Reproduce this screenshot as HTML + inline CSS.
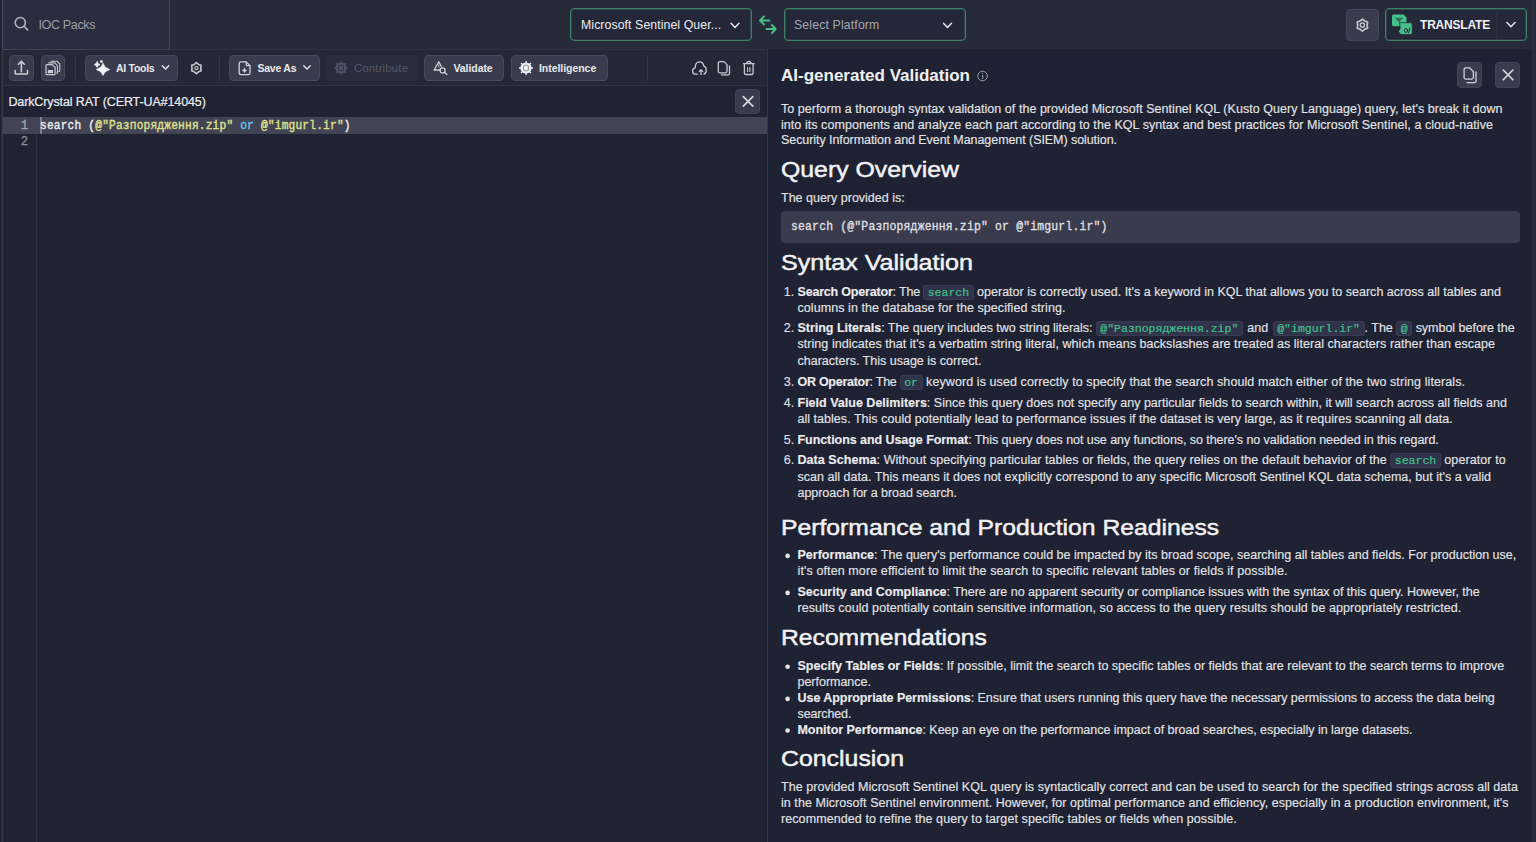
<!DOCTYPE html>
<html><head><meta charset="utf-8">
<style>
*{box-sizing:border-box;margin:0;padding:0}
html,body{width:1536px;height:842px;overflow:hidden;background:#202332;font-family:"Liberation Sans",sans-serif;color:#e4e4e8}
.a{position:absolute}
.tx{position:absolute;white-space:nowrap}
.dd{position:absolute;top:8px;height:33px;border:1px solid #3b8068;border-radius:4px;background:#242737;box-shadow:inset 0 0 0 1px rgba(59,128,104,0.35),inset 0 -2px 0 #251f36}
.btn{position:absolute;top:55px;height:26px;background:#3a3c4e;border:1px solid #45475a;border-radius:4px}
.btnt{position:absolute;top:61px;font-size:10.5px;line-height:14px;font-weight:bold;white-space:nowrap;color:#e8e8ec}
.sep{position:absolute;top:55px;width:1px;height:26px;background:#353848}
.ibtn{position:absolute;background:#3a3c4e;border-radius:4px}
.rp{position:absolute;white-space:nowrap;font-size:12.5px;line-height:20px;height:20px;color:#e2e2e6;-webkit-text-stroke:0.15px #e2e2e6}
.rp b{font-weight:bold;color:#ececf0}
.rh{position:absolute;white-space:nowrap;font-size:21.5px;line-height:28px;height:28px;color:#f2f2f4;font-weight:normal;-webkit-text-stroke:0.45px #f2f2f4;transform-origin:0 50%}
code{font-family:"Liberation Mono",monospace;font-size:11.5px;color:#42c08a;-webkit-text-stroke:0.2px #42c08a;background:#30334a;border:1px solid #3a3d52;border-radius:3px;padding:0 3.5px}
.mk{color:#dcdce2}
.mono{font-family:"Liberation Mono",monospace}
</style></head>
<body>
<!-- HEADER -->
<div class="a" style="left:0;top:0;width:1536px;height:49px;background:#272a39"></div>


<div class="dd" style="left:570px;width:182px"></div>
<div id="t_src" class="tx" style="left:581px;top:17.2px;font-size:12.3px;line-height:16px;color:#ececf0;letter-spacing:0.08px">Microsoft Sentinel Quer...</div>
<div class="dd" style="left:784px;width:182px"></div>
<div id="t_plat" class="tx" style="left:794px;top:17.2px;font-size:12.3px;line-height:16px;color:#a4a6b2;letter-spacing:0.14px">Select Platform</div>

<div class="ibtn" style="left:1346px;top:9px;width:33px;height:32px;border:1px solid #43465a"></div>
<div class="dd" style="left:1385px;width:142px;background:#252838"></div>
<div class="a" style="left:1496px;top:9px;width:1px;height:31px;background:#2c2f40"></div>
<div id="t_trans" class="tx" style="left:1420px;top:17px;font-size:12px;line-height:16px;font-weight:bold;color:#f0f0f2;letter-spacing:-0.2px">TRANSLATE</div>

<!-- LEFT PANEL -->
<div class="a" style="left:2px;top:49px;width:766px;height:793px;background:#202332;border-left:1px solid #3a3c48;border-right:1px solid #33364a"></div>
<div class="a" style="left:0;top:0;width:1px;height:842px;background:#1b1e2b"></div><div class="a" style="left:1px;top:0;width:1px;height:842px;background:#2b2d39"></div>
<div class="a" style="left:3px;top:49px;width:764px;height:37px;background:#262837;border-top:1px solid #2e3142;border-bottom:1px solid #303344"></div>

<div class="a" style="left:2px;top:-2px;width:168px;height:52px;background:#2a2d3d;border:1px solid #40435a;border-top:none;border-radius:0 0 3px 0"></div>
<div id="t_ioc" class="tx" style="left:38.5px;top:17px;font-size:12.5px;line-height:16px;letter-spacing:-0.35px;color:#9c9eab">IOC Packs</div>
<div class="btn" style="left:9px;width:25px"></div>
<div class="btn" style="left:41px;width:24px"></div>
<div class="sep" style="left:75px"></div>
<div class="btn" style="left:85px;width:93px"></div>
<div id="t_ai" class="btnt" style="left:116px;letter-spacing:-0.29px">AI Tools</div>
<div class="sep" style="left:219px"></div>
<div class="btn" style="left:229px;width:91px"></div>
<div id="t_save" class="btnt" style="left:257.5px;letter-spacing:-0.25px">Save As</div>
<div class="btn" style="left:326px;width:92px;background:#2a2c3c;border-color:#2c2e3e"></div>
<div id="t_contrib" class="btnt" style="left:354px;color:#555868;font-weight:normal;font-size:11.3px;letter-spacing:0.2px">Contribute</div>
<div class="btn" style="left:424px;width:80px"></div>
<div id="t_val" class="btnt" style="left:453.5px;letter-spacing:-0.07px">Validate</div>
<div class="btn" style="left:511px;width:97px"></div>
<div id="t_intel" class="btnt" style="left:539px;letter-spacing:-0.05px">Intelligence</div>
<div class="sep" style="left:647px"></div>

<div id="t_title" class="tx" style="left:8.4px;top:95px;letter-spacing:-0.11px;font-size:12.5px;color:#eeeef1;-webkit-text-stroke:0.2px #eeeef1">DarkCrystal RAT (CERT-UA#14045)</div>
<div class="ibtn" style="left:735px;top:89px;width:25px;height:25px;border:1px solid #414456"></div>

<!-- editor -->
<div class="a" style="left:36px;top:117px;width:1px;height:725px;background:#2e3142"></div>
<div class="a" style="left:3px;top:117px;width:764px;height:17px;background:#424454"></div>
<div class="a" style="left:40px;top:117px;width:1.5px;height:17px;background:#7d8090"></div>
<div class="tx mono" style="left:3px;top:117.5px;width:25px;text-align:right;font-size:12.2px;line-height:17px;color:#a4a6b0;-webkit-text-stroke:0.3px #a4a6b0">1</div>
<div class="tx mono" style="left:3px;top:134px;width:25px;text-align:right;font-size:12.2px;line-height:17px;color:#8a8c98;-webkit-text-stroke:0.3px #8a8c98">2</div>
<div id="t_code" class="tx mono" style="left:40px;top:117.5px;letter-spacing:0.19px;font-size:11.2px;line-height:17px;color:#ececf0;-webkit-text-stroke:0.35px #ececf0;transform:scaleY(1.2);transform-origin:0 12px">search (<span style="color:#dfe08c;-webkit-text-stroke-color:#dfe08c">@"Разпорядження.zip"</span> <span style="color:#66c2ea;-webkit-text-stroke-color:#66c2ea">or</span> <span style="color:#dfe08c;-webkit-text-stroke-color:#dfe08c">@"imgurl.ir"</span>)</div>

<!-- RIGHT PANEL -->
<div class="a" style="left:768px;top:49px;width:764px;height:793px;background:#1f2232"></div>
<div id="t_aigen" class="tx" style="left:781px;top:66px;line-height:20px;font-size:17px;font-weight:bold;color:#f0f0f2">AI-generated Validation</div>
<div class="ibtn" style="left:1457px;top:62px;width:25px;height:26px;border:1px solid #414456"></div>
<div class="ibtn" style="left:1495px;top:62px;width:25px;height:26px;border:1px solid #414456"></div>
<div class="a" style="left:781px;top:210.5px;width:739px;height:32px;background:#3a3c4e;border-radius:4px"></div>
<div id="t_cb" class="tx mono" style="left:791px;top:219px;letter-spacing:0.2px;font-size:11.4px;line-height:17px;color:#e2e2e6;-webkit-text-stroke:0.25px #e2e2e6;transform:scaleY(1.2);transform-origin:0 12px">search (@"Разпорядження.zip" or @"imgurl.ir")</div>
<div class="rp" id="l0" style="top:98.57px;left:781px;letter-spacing:0.038px">To perform a thorough syntax validation of the provided Microsoft Sentinel KQL (Kusto Query Language) query, let's break it down</div>
<div class="rp" id="l1" style="top:114.57px;left:781px;letter-spacing:0.057px">into its components and analyze each part according to the KQL syntax and best practices for Microsoft Sentinel, a cloud-native</div>
<div class="rp" id="l2" style="top:130.07px;left:781px;letter-spacing:-0.066px">Security Information and Event Management (SIEM) solution.</div>
<div class="rh" id="l3" style="top:156.25px;left:781px;transform:scaleX(1.1549)">Query Overview</div>
<div class="rp" id="l4" style="top:187.57px;left:781px;letter-spacing:0.001px">The query provided is:</div>
<div class="rh" id="l5" style="top:248.55px;left:781px;transform:scaleX(1.1668)">Syntax Validation</div>
<div class="rp" id="l6_s0" style="top:281.57px;left:797.50px;letter-spacing:-0.190px;word-spacing:0.000px;white-space:pre"><b>Search Operator</b>: The </div>
<div class="rp" id="l6_c0" style="top:281.57px;left:923.2px"><code>search</code></div>
<div class="rp" id="l6_s1" style="top:281.57px;left:973.61px;letter-spacing:0.009px;word-spacing:0.000px;white-space:pre"> operator is correctly used. It's a keyword in KQL that allows you to search across all tables and</div>
<div class="rp" id="l7" style="top:297.67px;left:797.5px;letter-spacing:0.066px">columns in the database for the specified string.</div>
<div class="rp" id="l8_s0" style="top:318.17px;left:797.50px;letter-spacing:-0.028px;word-spacing:0.000px;white-space:pre"><b>String Literals</b>: The query includes two string literals: </div>
<div class="rp" id="l8_c0" style="top:318.17px;left:1095.8px"><code>@"Разпорядження.zip"</code></div>
<div class="rp" id="l8_s1" style="top:318.17px;left:1242.83px;letter-spacing:0.000px;word-spacing:1.033px;white-space:pre"> and </div>
<div class="rp" id="l8_c1" style="top:318.17px;left:1272.7px"><code>@"imgurl.ir"</code></div>
<div class="rp" id="l8_s2" style="top:318.17px;left:1364.52px;letter-spacing:0.000px;word-spacing:0.022px;white-space:pre">. The </div>
<div class="rp" id="l8_c2" style="top:318.17px;left:1396.3px"><code>@</code></div>
<div class="rp" id="l8_s3" style="top:318.17px;left:1412.20px;letter-spacing:-0.019px;word-spacing:0.000px;white-space:pre"> symbol before the</div>
<div class="rp" id="l9" style="top:334.37px;left:797.5px;letter-spacing:0.051px">string indicates that it's a verbatim string literal, which means backslashes are treated as literal characters rather than escape</div>
<div class="rp" id="l10" style="top:350.87px;left:797.5px;letter-spacing:0.004px">characters. This usage is correct.</div>
<div class="rp" id="l11_s0" style="top:371.67px;left:797.50px;letter-spacing:-0.268px;word-spacing:0.000px;white-space:pre"><b>OR Operator</b>: The </div>
<div class="rp" id="l11_c0" style="top:371.67px;left:899.7px"><code>or</code></div>
<div class="rp" id="l11_s1" style="top:371.67px;left:922.50px;letter-spacing:0.089px;word-spacing:0.000px;white-space:pre"> keyword is used correctly to specify that the search should match either of the two string literals.</div>
<div class="rp" id="l12" style="top:392.57px;left:797.5px;letter-spacing:0.006px"><b>Field Value Delimiters</b>: Since this query does not specify any particular fields to search within, it will search across all fields and</div>
<div class="rp" id="l13" style="top:408.87px;left:797.5px;letter-spacing:0.030px">all tables. This could potentially lead to performance issues if the dataset is very large, as it requires scanning all data.</div>
<div class="rp" id="l14" style="top:429.57px;left:797.5px;letter-spacing:-0.062px"><b>Functions and Usage Format</b>: This query does not use any functions, so there's no validation needed in this regard.</div>
<div class="rp" id="l15_s0" style="top:450.17px;left:797.50px;letter-spacing:0.052px;word-spacing:0.000px;white-space:pre"><b>Data Schema</b>: Without specifying particular tables or fields, the query relies on the default behavior of the </div>
<div class="rp" id="l15_c0" style="top:450.17px;left:1390.3px"><code>search</code></div>
<div class="rp" id="l15_s1" style="top:450.17px;left:1440.72px;letter-spacing:0.095px;word-spacing:0.000px;white-space:pre"> operator to</div>
<div class="rp" id="l16" style="top:466.87px;left:797.5px;letter-spacing:0.026px">scan all data. This means it does not explicitly correspond to any specific Microsoft Sentinel KQL data schema, but it's a valid</div>
<div class="rp" id="l17" style="top:482.87px;left:797.5px;letter-spacing:-0.038px">approach for a broad search.</div>
<div class="rh" id="l18" style="top:513.65px;left:781px;transform:scaleX(1.1494)">Performance and Production Readiness</div>
<div class="rp" id="l19" style="top:545.37px;left:797.5px;letter-spacing:0.013px"><b>Performance</b>: The query's performance could be impacted by its broad scope, searching all tables and fields. For production use,</div>
<div class="rp" id="l20" style="top:561.37px;left:797.5px;letter-spacing:0.110px">it's often more efficient to limit the search to specific relevant tables or fields if possible.</div>
<div class="rp" id="l21" style="top:582.37px;left:797.5px;letter-spacing:-0.014px"><b>Security and Compliance</b>: There are no apparent security or compliance issues with the syntax of this query. However, the</div>
<div class="rp" id="l22" style="top:598.37px;left:797.5px;letter-spacing:0.070px">results could potentially contain sensitive information, so access to the query results should be appropriately restricted.</div>
<div class="rh" id="l23" style="top:624.45px;left:781px;transform:scaleX(1.1480)">Recommendations</div>
<div class="rp" id="l24" style="top:656.17px;left:797.5px;letter-spacing:0.009px"><b>Specify Tables or Fields</b>: If possible, limit the search to specific tables or fields that are relevant to the search terms to improve</div>
<div class="rp" id="l25" style="top:672.17px;left:797.5px;letter-spacing:-0.023px">performance.</div>
<div class="rp" id="l26" style="top:688.37px;left:797.5px;letter-spacing:-0.051px"><b>Use Appropriate Permissions</b>: Ensure that users running this query have the necessary permissions to access the data being</div>
<div class="rp" id="l27" style="top:703.97px;left:797.5px;letter-spacing:-0.125px">searched.</div>
<div class="rp" id="l28" style="top:719.97px;left:797.5px;letter-spacing:-0.038px"><b>Monitor Performance</b>: Keep an eye on the performance impact of broad searches, especially in large datasets.</div>
<div class="rh" id="l29" style="top:745.05px;left:781px;transform:scaleX(1.1563)">Conclusion</div>
<div class="rp" id="l30" style="top:777.07px;left:781px;letter-spacing:0.048px">The provided Microsoft Sentinel KQL query is syntactically correct and can be used to search for the specified strings across all data</div>
<div class="rp" id="l31" style="top:793.27px;left:781px;letter-spacing:0.055px">in the Microsoft Sentinel environment. However, for optimal performance and efficiency, especially in a production environment, it's</div>
<div class="rp" id="l32" style="top:809.27px;left:781px;letter-spacing:0.086px">recommended to refine the query to target specific tables or fields when possible.</div>
<svg class="a" style="left:0;top:0" width="1536" height="842" viewBox="0 0 1536 842"><circle cx="787.6" cy="555.9" r="2.3" fill="#e6e6ea"/><circle cx="787.6" cy="592.9" r="2.3" fill="#e6e6ea"/><circle cx="787.6" cy="666.7" r="2.3" fill="#e6e6ea"/><circle cx="787.6" cy="698.9" r="2.3" fill="#e6e6ea"/><circle cx="787.6" cy="730.5" r="2.3" fill="#e6e6ea"/></svg><div class="rp mk" style="top:281.57px;left:783.8px">1.</div>
<div class="rp mk" style="top:318.17px;left:783.8px">2.</div>
<div class="rp mk" style="top:371.67px;left:783.8px">3.</div>
<div class="rp mk" style="top:392.57px;left:783.8px">4.</div>
<div class="rp mk" style="top:429.57px;left:783.8px">5.</div>
<div class="rp mk" style="top:450.17px;left:783.8px">6.</div>
<div class="a" style="left:1532px;top:0;width:4px;height:842px;background:#2c2e3d;border-right:1px solid #24263a"></div>

<!-- ICON OVERLAY (page coordinates) -->
<svg class="a" style="left:0;top:0" width="1536" height="842" viewBox="0 0 1536 842" fill="none" stroke-linecap="round" stroke-linejoin="round">
  <!-- search -->
  <circle cx="20.3" cy="22.6" r="5.1" stroke="#b4b5be" stroke-width="1.6"/>
  <path d="M24 26.3 L27.6 29.9" stroke="#b4b5be" stroke-width="1.6"/>
  <!-- dropdown chevrons -->
  <path d="M731 23.3 L735 27.5 L739 23.3" stroke="#e6e6ea" stroke-width="1.5"/>
  <path d="M943.5 23.3 L947.5 27.5 L951.5 23.3" stroke="#e6e6ea" stroke-width="1.5"/>
  <path d="M1507 22.5 L1511 26.8 L1515 22.5" stroke="#e6e6ea" stroke-width="1.5"/>
  <!-- swap arrows -->
  <path d="M769.5 20.5 H760 M764 16.5 L760 20.5 L764 24.5" stroke="#45c08a" stroke-width="1.8"/>
  <path d="M766.5 29 H775.5 M771.8 25 L775.7 29 L771.8 33" stroke="#45c08a" stroke-width="1.8"/>
  <!-- header gear -->
  <path d="M1362.40 19.10 L1364.75 21.03 L1367.60 22.10 L1367.10 25.10 L1367.60 28.10 L1364.75 29.17 L1362.40 31.10 L1360.05 29.17 L1357.20 28.10 L1357.70 25.10 L1357.20 22.10 L1360.05 21.03Z" stroke="#c2c3ca" stroke-width="1.7"/>
  <circle cx="1362.4" cy="25.1" r="2.1" stroke="#c2c3ca" stroke-width="1.4"/>
  <!-- translate icon -->
  <path d="M1393.5 14.5 H1403.5 L1406.5 17.5 V24.5 Q1406.5 26.2 1404.8 26.2 H1393.7 Q1392 26.2 1392 24.5 V16.2 Q1392 14.5 1393.5 14.5Z" fill="#45c08a"/>
  <path d="M1395 17.8 L1399 22.5 L1403 17.8 Z" fill="#2f6e55"/>
  <path d="M1400 22.7 H1410.5 Q1412.2 22.7 1412.2 24.4 V32.9 Q1412.2 34.6 1410.5 34.6 H1401 L1398.3 31.5 L1400 29Z" fill="#45c08a" stroke="#252838" stroke-width="0.8"/>
  <circle cx="1406" cy="30.5" r="1.8" stroke="#252838" stroke-width="1"/>
  <path d="M1409.5 28 Q1410 30.5 1408.5 33" stroke="#252838" stroke-width="0.9"/>

  <!-- upload -->
  <path d="M21.35 71.7 V61.6 M18.4 64.3 L21.35 61.4 L24.3 64.3" stroke="#cfd0d6" stroke-width="1.5"/>
  <path d="M15.2 70.4 V73.2 Q15.2 74.1 16.1 74.1 H26.6 Q27.5 74.1 27.5 73.2 V70.4" stroke="#cfd0d6" stroke-width="1.5"/>
  <!-- copy-save stacked -->
  <path d="M51 61.2 H57 L59.8 64 V70.6 Q59.8 71.6 58.8 71.6" stroke="#c9cad1" stroke-width="1.1" fill="#3a3c4e"/>
  <path d="M48.7 62.9 H54.7 L57.5 65.7 V72.3 Q57.5 73.3 56.5 73.3" stroke="#c9cad1" stroke-width="1.1" fill="#3a3c4e"/>
  <path d="M47 64.6 H52.4 L55.1 67.3 V73.7 Q55.1 74.7 54.1 74.7 H47 Q46 74.7 46 73.7 V65.6 Q46 64.6 47 64.6Z" stroke="#c9cad1" stroke-width="1.2" fill="#3a3c4e"/>
  <rect x="47.8" y="70" width="5.2" height="3.2" fill="#c9cad1" stroke="none"/>
  <!-- sparkles -->
  <path d="M103 63.6 Q104.4 68.1 109.6 69.5 Q104.4 70.9 103 75.4 Q101.6 70.9 96.4 69.5 Q101.6 68.1 103 63.6Z" fill="#f4f4f6" stroke="#f4f4f6" stroke-width="0.8"/>
  <path d="M97.1 61.8 Q97.8 63.9 100 64.6 Q97.8 65.3 97.1 67.4 Q96.4 65.3 94.2 64.6 Q96.4 63.9 97.1 61.8Z" fill="#f4f4f6" stroke="#f4f4f6" stroke-width="0.7"/>
  <circle cx="101.4" cy="61.6" r="1.4" fill="#f4f4f6"/>
  <path d="M162.3 65.8 L165.5 69 L168.7 65.8" stroke="#e6e6ea" stroke-width="1.4"/>
  <!-- toolbar gear -->
  <path d="M196.40 62.60 L198.55 64.38 L201.16 65.35 L200.70 68.10 L201.16 70.85 L198.55 71.82 L196.40 73.60 L194.25 71.82 L191.64 70.85 L192.10 68.10 L191.64 65.35 L194.25 64.38Z" stroke="#c6c7ce" stroke-width="1.6"/>
  <circle cx="196.4" cy="68.1" r="1.6" stroke="#c9cad1" stroke-width="1.2"/>
  <!-- file plus -->
  <path d="M241 61.9 H246.3 L250 65.6 V72.9 Q250 74.7 248.2 74.7 H241 Q239.2 74.7 239.2 72.9 V63.7 Q239.2 61.9 241 61.9Z" stroke="#d2d3d8" stroke-width="1.3"/>
  <path d="M246.3 62.2 V65.6 H249.8" stroke="#d2d3d8" stroke-width="1.2"/>
  <path d="M244.5 68.2 Q244.8 70 246.7 70.4 Q244.8 70.8 244.5 72.6 Q244.2 70.8 242.3 70.4 Q244.2 70 244.5 68.2Z" fill="#d2d3d8" stroke="#d2d3d8" stroke-width="0.6"/>
  <path d="M303.8 65.8 L307 69 L310.2 65.8" stroke="#e6e6ea" stroke-width="1.4"/>
  <!-- chip (disabled) -->
  <circle cx="341" cy="68" r="5.6" fill="#4f5264"/>
  <path d="M341 61.6 V74.4 M334.6 68 H347.4 M336.5 63.5 L345.5 72.5 M345.5 63.5 L336.5 72.5" stroke="#4f5264" stroke-width="1.3" stroke-dasharray="1 1"/>
  <rect x="338.6" y="65.3" width="4.8" height="5.4" rx="1.2" stroke="#2f3142" stroke-width="1.1"/>
  <!-- validate -->
  <path d="M438.8 62 L434 70 H440" stroke="#d2d3d8" stroke-width="1.3"/>
  <path d="M438.8 62 L441.3 66.3" stroke="#d2d3d8" stroke-width="1.3"/>
  <path d="M438.8 65 V67.2" stroke="#d2d3d8" stroke-width="0.9"/>
  <circle cx="442.6" cy="70.4" r="2.5" stroke="#d2d3d8" stroke-width="1.3"/>
  <path d="M444.5 72.3 L446.8 74.5" stroke="#d2d3d8" stroke-width="1.4"/>
  <!-- intelligence -->
  <circle cx="526" cy="68" r="5.6" fill="#f0f0f3"/>
  <path d="M526 61.5 V74.5 M519.5 68 H532.5 M521.4 63.4 L530.6 72.6 M530.6 63.4 L521.4 72.6" stroke="#f0f0f3" stroke-width="1.4" stroke-dasharray="1 1"/>
  <rect x="523.6" y="65.3" width="4.8" height="5.4" rx="1.2" stroke="#8e909c" stroke-width="1.1"/>
  <!-- cloud -->
  <path d="M697.5 74.2 H695.5 Q692.6 74.2 692.6 71 Q692.6 68.2 695.2 67.9 Q695.3 61.8 699.6 61.8 Q703.3 61.8 703.8 66.2 Q706.2 66.8 706.2 70.2 Q706.2 73.4 704 74.2" stroke="#c9cad1" stroke-width="1.3"/>
  <path d="M701 74.4 V69.8 M699.3 71.4 L701 69.6 L702.7 71.4" stroke="#c9cad1" stroke-width="1.3"/>
  <!-- copy -->
  <path d="M719.8 61.6 H724 L727 64.6 V71.3 Q727 72.8 725.5 72.8 H719.8 Q718.3 72.8 718.3 71.3 V63.1 Q718.3 61.6 719.8 61.6Z" stroke="#c9cad1" stroke-width="1.3"/>
  <path d="M729.5 66 V73.5 Q729.5 74.8 728.2 74.8 H721.5" stroke="#c9cad1" stroke-width="1.3"/>
  <!-- trash -->
  <path d="M743.5 63.7 H754 M746.6 63.5 Q746.8 61.5 748.8 61.5 Q750.8 61.5 751 63.5" stroke="#c9cad1" stroke-width="1.3"/>
  <path d="M744.4 64 V72.9 Q744.4 74.5 746 74.5 H751.5 Q753.1 74.5 753.1 72.9 V64" stroke="#c9cad1" stroke-width="1.3"/>
  <path d="M747.6 67.5 V71.5 M749.9 67.5 V71.5" stroke="#c9cad1" stroke-width="1.1"/>
  <!-- title close -->
  <path d="M743.3 96.6 L752.8 106.1 M752.8 96.6 L743.3 106.1" stroke="#dcdde2" stroke-width="1.6"/>
  <!-- info -->
  <circle cx="982.6" cy="76" r="4.8" stroke="#9a9ca8" stroke-width="1"/>
  <path d="M982.6 75.2 V78.6" stroke="#9a9ca8" stroke-width="1.1"/>
  <circle cx="982.6" cy="73.3" r=".6" fill="#9a9ca8"/>
  <!-- panel copy -->
  <path d="M1465.6 67.8 H1469.6 L1473.4 71.6 V77.6 Q1473.4 79.1 1471.9 79.1 H1465.6 Q1464.1 79.1 1464.1 77.6 V69.3 Q1464.1 67.8 1465.6 67.8Z" stroke="#d0d1d6" stroke-width="1.3"/>
  <path d="M1476 72 V81.2 Q1476 82.6 1474.6 82.6 H1467" stroke="#d0d1d6" stroke-width="1.3"/>
  <!-- panel close -->
  <path d="M1503.2 70 L1512.9 79.8 M1512.9 70 L1503.2 79.8" stroke="#dcdde2" stroke-width="1.6"/>
</svg>
</body></html>
